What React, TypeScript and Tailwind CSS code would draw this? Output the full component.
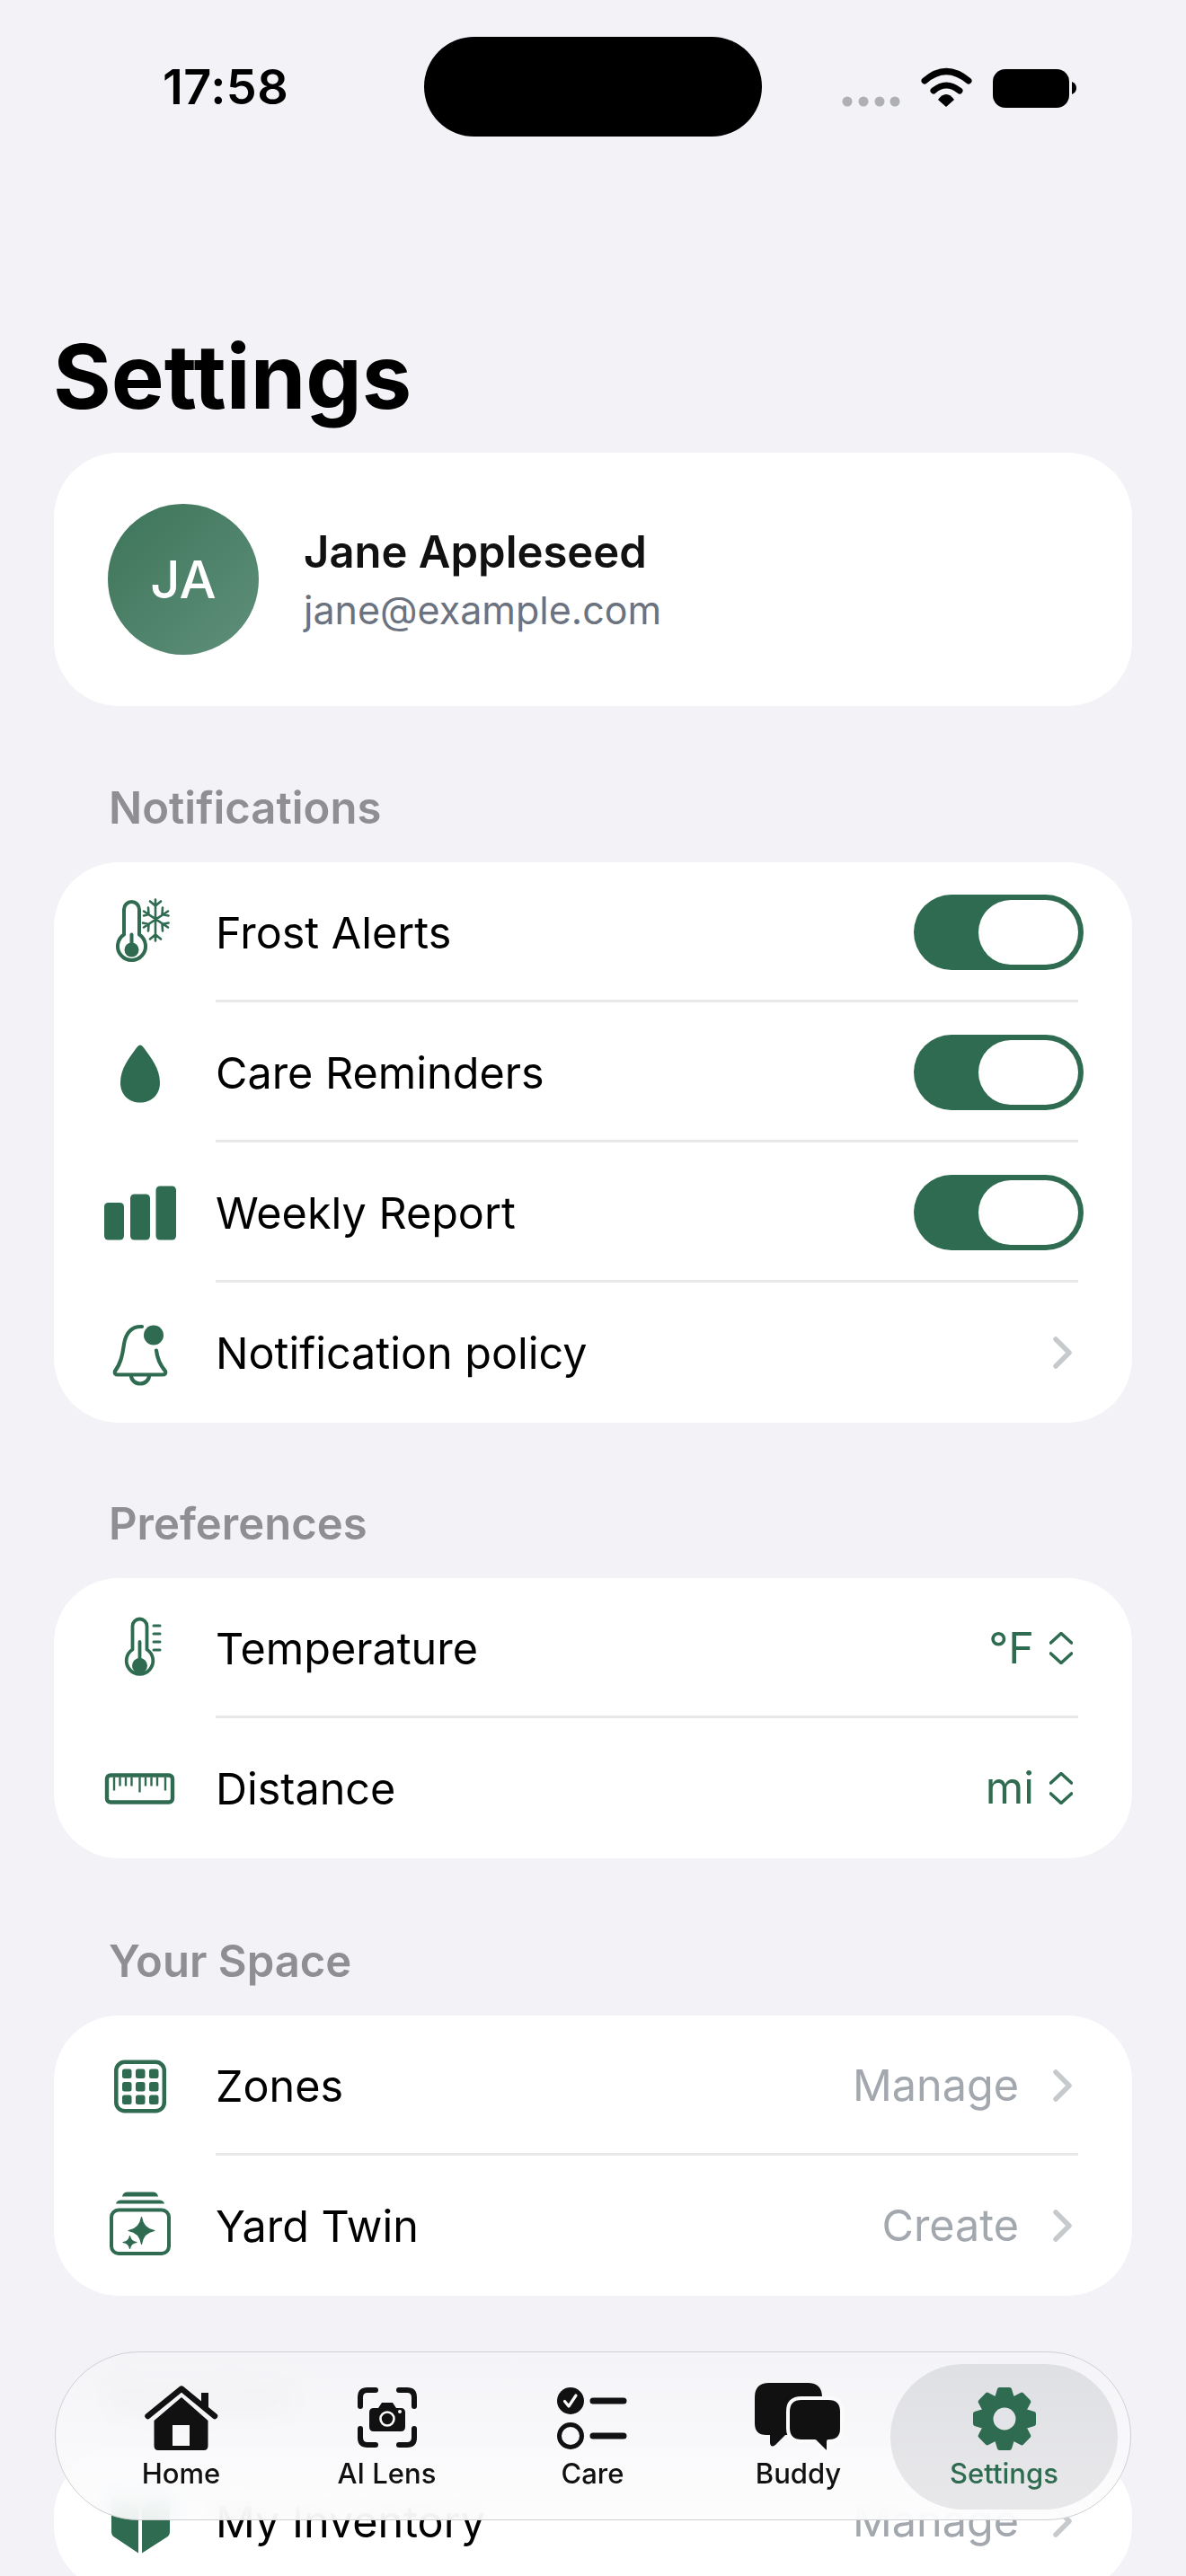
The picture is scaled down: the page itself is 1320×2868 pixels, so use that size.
import type { ReactNode } from "react";

const GREEN = "#2f6b50";
const INK = "#111111";

function gearPath(cx: number, cy: number) {
    const points: string[] = [];
    for (let i = 0; i < 8; i++) {
        const a = ((i * 45 - 90) * Math.PI) / 180;
        const spots: [number, number][] = [
            [25, -0.34],
            [33, -0.17],
            [33, 0.17],
            [25, 0.34],
        ];
        for (const [r, d] of spots) {
            points.push(`${(cx + r * Math.cos(a + d)).toFixed(1)} ${(cy + r * Math.sin(a + d)).toFixed(1)}`);
        }
    }
    return `M${points.join("L")}Z`;
}

function RowIcon({ cy, children }: { cy: number; children: ReactNode }) {
    return (
        <svg width="120" height="90" viewBox={`96 ${cy - 45} 120 90`} className="shrink-0 ml-[36px] mr-[24px]" fill="none" stroke={GREEN} strokeLinecap="round" strokeLinejoin="round">
            {children}
        </svg>
    );
}

function Chevron() {
    return (
        <svg width="21" height="36" viewBox="0 0 21 36" fill="none" className="ml-[38px] mr-[7px]">
            <path d="M3 3 L18 18 L3 33" stroke="#c6cacc" strokeWidth="5.5" strokeLinecap="round" strokeLinejoin="round" />
        </svg>
    );
}

function UpDown() {
    return (
        <svg width="26" height="36" viewBox="0 0 26 36" fill="none" className="ml-[17px] mr-[6px]">
            <path d="M1.5 12 L13 1.5 L24.5 12 M1.5 24 L13 34.5 L24.5 24" stroke={GREEN} strokeWidth="3.6" strokeLinecap="round" strokeLinejoin="round" />
        </svg>
    );
}

function Toggle() {
    return (
        <div className="w-[189px] h-[84px] rounded-full bg-[#2f6b50] p-[6px] flex justify-end -mr-[6px]">
            <div className="w-[111px] h-[72px] rounded-full bg-white" />
        </div>
    );
}

function Row({ icon, label, right }: { icon: ReactNode; label: string; right?: ReactNode }) {
    return (
        <div className="h-[153px] flex items-center pr-[60px]">
            {icon}
            <span className="pt-[4px] text-[48.5px] leading-[60px] text-black">{label}</span>
            <div className="ml-auto pt-[3px] flex items-center">{right}</div>
        </div>
    );
}

function Divider() {
    return <div className="h-[3px] ml-[180px] mr-[60px] bg-[#e8e8ea]" />;
}

function Section({ title, className, children }: { title: string; className: string; children: ReactNode }) {
    return (
        <section className={className}>
            <h2 className="pl-[61px] mb-[30px] text-[49px] leading-[60px] font-semibold text-[#8e8e93]">{title}</h2>
            <div className="bg-white rounded-[72px] overflow-hidden pb-[3px]">{children}</div>
        </section>
    );
}

function Value({ children, muted }: { children: string; muted?: boolean }) {
    return <span className={muted ? "text-[48.5px] leading-[60px] text-[#a2a8ae]" : "text-[48.5px] leading-[60px] text-[#2f6b50]"}>{children}</span>;
}

function StatusBar() {
    return (
        <div className="h-[360px] pt-[41px]">
            <div className="h-[111px] flex items-center">
                <span className="ml-[181px] w-[291px] text-[54px] font-semibold leading-none text-black tracking-[0.5px]">17:58</span>
                <div className="w-[376px] h-[111px] rounded-full bg-black" />
                <svg width="280" height="60" viewBox="930 66 280 60" className="ml-[82px]">
                    <g fill="#aeb0b3">
                        <circle cx="943" cy="112" r="5.5" />
                        <circle cx="961" cy="112" r="5.5" />
                        <circle cx="979" cy="112" r="5.5" />
                        <circle cx="996" cy="112" r="5.5" />
                    </g>
                    <path d="M1029 89 Q1053 68 1078 89 M1039 100 Q1053 88 1068 100" fill="none" stroke="#000" strokeWidth="7" strokeLinecap="round" />
                    <path d="M1053 104 Q1058 104 1062 110 L1053 118 L1044 110 Q1048 104 1053 104Z" fill="#000" />
                    <rect x="1105" y="76" width="85" height="43" rx="14" fill="#000" />
                    <path d="M1193 90 Q1198 92 1198 97 Q1198 102 1193 104Z" fill="#000" />
                </svg>
            </div>
        </div>
    );
}

function NavItem({ label, active, children }: { label: string; active?: boolean; children: ReactNode }) {
    return (
        <div className="relative w-[229px] flex flex-col items-center pt-[34px]">
            {active && <div className="absolute left-[-12px] right-[-12px] top-[13px] h-[162px] rounded-[81px] bg-linear-to-b from-[#dfe0e3] to-[#e8e8eb]" />}
            <div className="relative h-[80px]">{children}</div>
            <span className={active ? "relative mt-[1px] text-[31px] leading-[40px] font-medium text-[#2f6b50]" : "relative mt-[1px] text-[31px] leading-[40px] font-medium text-[#111]"}>{label}</span>
        </div>
    );
}

function BottomNav() {
    return (
        <nav className="absolute left-[61px] top-[2618px] w-[1198px] h-[188px] rounded-[94px] px-[25px] flex bg-linear-to-b from-[#f5f5f8]/90 to-[#fdfdfe]/90 backdrop-blur-lg border border-[#cfd0d3]">
            <NavItem label="Home">
                <svg width="120" height="80" viewBox="143 2652 120 80">
                    <path d="M172.5 2694 L203 2668 L232.5 2694 V2722 Q232.5 2727 228 2727 H177 Q172.5 2727 172.5 2722Z M193 2699 V2722 H212 V2699Z" fill={INK} fillRule="evenodd" />
                    <path d="M165.5 2689 L203 2658.5 L240 2689" fill="none" stroke={INK} strokeWidth="6.5" strokeLinecap="round" strokeLinejoin="round" />
                    <rect x="225" y="2663" width="8" height="18" fill={INK} />
                </svg>
            </NavItem>
            <NavItem label="AI Lens">
                <svg width="120" height="80" viewBox="370 2652 120 80">
                    <path d="M400 2678 V2668 Q400 2660 408 2660 H417 M443 2660 H452 Q460 2660 460 2668 V2678 M460 2703 V2713 Q460 2721 452 2721 H443 M417 2721 H408 Q400 2721 400 2713 V2703" fill="none" stroke={INK} strokeWidth="6" strokeLinecap="round" />
                    <path d="M415 2680 H420 L424 2674 H436 L440 2680 H445 Q450 2680 450 2685 V2701 Q450 2706 445 2706 H415 Q410 2706 410 2701 V2685 Q410 2680 415 2680Z" fill={INK} />
                    <circle cx="430" cy="2692" r="7.5" fill="none" stroke="#fbfbfc" strokeWidth="2.6" />
                    <circle cx="444" cy="2684" r="2" fill="#fbfbfc" />
                </svg>
            </NavItem>
            <NavItem label="Care">
                <svg width="120" height="80" viewBox="600 2652 120 80">
                    <circle cx="635" cy="2672" r="15" fill={INK} />
                    <path d="M628.5 2672.5 L633 2678 L641 2666" fill="none" stroke="#fbfbfc" strokeWidth="3.2" strokeLinecap="round" strokeLinejoin="round" />
                    <circle cx="635" cy="2711" r="12.5" fill="none" stroke={INK} strokeWidth="5" />
                    <path d="M660 2672 H694 M660 2711 H694" stroke={INK} strokeWidth="7" strokeLinecap="round" />
                </svg>
            </NavItem>
            <NavItem label="Buddy">
                <svg width="120" height="80" viewBox="829 2652 120 80">
                    <path d="M856 2652 H899 Q915 2652 915 2668 V2700 Q915 2710 905 2710 H874 L863 2721 Q858 2725 857 2719 V2710 H853 Q840 2710 840 2697 V2668 Q840 2652 856 2652Z" fill={INK} />
                    <path d="M892 2669 H922 Q937 2669 937 2684 V2703 Q937 2717 923 2717 H922 V2727 Q921 2731 917 2727 L907 2717 H892 Q877 2717 877 2702 V2684 Q877 2669 892 2669Z" fill={INK} stroke="#fbfbfc" strokeWidth="4" strokeLinejoin="round" />
                </svg>
            </NavItem>
            <NavItem label="Settings" active>
                <svg width="120" height="80" viewBox="1057 2651 120 80">
                    <path d={gearPath(1117, 2691)} fill={GREEN} stroke={GREEN} strokeWidth="5" strokeLinejoin="round" />
                    <circle cx="1117" cy="2691" r="12.5" fill="#e3e4e7" />
                </svg>
            </NavItem>
        </nav>
    );
}

export default function App() {
    return (
        <div className="relative w-[1320px] h-[2868px] overflow-hidden bg-[#f2f2f7] font-[Inter,sans-serif]">
            <StatusBar />

            <div className="px-[60px]">
                <h1 className="h-[144px] -ml-[1px] text-[99px] leading-[118px] font-bold text-black">Settings</h1>

                {/* Profile */}
                <div className="h-[282px] bg-white rounded-[72px] flex items-center pl-[60px]">
                    <div className="w-[168px] h-[168px] rounded-full bg-linear-to-br from-[#3d7559] to-[#5f8f7b] flex items-center justify-center text-white text-[58px] font-medium">JA</div>
                    <div className="ml-[50px] pt-[4px]">
                        <div className="text-[49px] leading-[64px] font-semibold text-[#111]">Jane Appleseed</div>
                        <div className="text-[43px] leading-[64px] text-[#6b7280]">jane@example.com</div>
                    </div>
                </div>

                <Section title="Notifications" className="mt-[84px]">
                    <Row
                        label="Frost Alerts"
                        right={<Toggle />}
                        icon={
                            <RowIcon cy={1036.5}>
                                <path d="M138 1040 V1012 A8.5 8.5 0 0 1 155 1012 V1040 A15.5 15.5 0 1 1 138 1040Z" strokeWidth="4" />
                                <circle cx="146.5" cy="1057" r="8" fill={GREEN} stroke="none" />
                                <path d="M146.5 1057 V1040" strokeWidth="4" />
                                <path d="M173 1001 V1047 M160 1014 L187 1032 M187 1014 L160 1032 M167 1003 L173 1008 L179 1003 M167 1045 L173 1040 L179 1045 M181 1010 L180.5 1017.5 L187.5 1019 M159 1027 L165.5 1028.5 L165 1036 M181 1036 L180.5 1028.5 L187.5 1027 M160 1019 L165.5 1017.5 L165 1010" strokeWidth="2.6" />
                            </RowIcon>
                        }
                    />
                    <Divider />
                    <Row
                        label="Care Reminders"
                        right={<Toggle />}
                        icon={
                            <RowIcon cy={1192.5}>
                                <path d="M156 1163 Q158 1163 160 1166 C168 1177 178 1189 178 1205 C178 1219 168 1227 156 1227 C144 1227 134 1219 134 1205 C134 1189 144 1177 152 1166 Q154 1163 156 1163Z" fill={GREEN} stroke="none" />
                            </RowIcon>
                        }
                    />
                    <Divider />
                    <Row
                        label="Weekly Report"
                        right={<Toggle />}
                        icon={
                            <RowIcon cy={1348.5}>
                                <g fill={GREEN} stroke="none">
                                    <rect x="116" y="1338.5" width="22" height="41.5" rx="4.5" />
                                    <rect x="145" y="1329" width="22" height="51" rx="4.5" />
                                    <rect x="173.5" y="1320" width="22.5" height="60" rx="4.5" />
                                </g>
                            </RowIcon>
                        }
                    />
                    <Divider />
                    <Row
                        label="Notification policy"
                        right={<Chevron />}
                        icon={
                            <RowIcon cy={1504.5}>
                                <path d="M158 1476.5 C146 1476 140 1484 138 1496 C136 1510 134 1518 128 1526 Q127 1530 131 1530 H181 Q185 1530 184 1526 C178 1519 175 1512 174 1503" strokeWidth="4.2" />
                                <path d="M146 1531 A10 9 0 0 0 166 1531" strokeWidth="4.2" />
                                <circle cx="171" cy="1486" r="11" fill={GREEN} stroke="none" />
                            </RowIcon>
                        }
                    />
                </Section>

                <Section title="Preferences" className="mt-[83px]">
                    <Row
                        label="Temperature"
                        right={
                            <>
                                <Value>°F</Value>
                                <UpDown />
                            </>
                        }
                        icon={
                            <RowIcon cy={1833.5}>
                                <path d="M147.5 1836 V1810 A8 8 0 0 1 163.5 1810 V1836 A14.8 14.8 0 1 1 147.5 1836Z" strokeWidth="3.8" />
                                <circle cx="155.5" cy="1854" r="8.5" fill={GREEN} stroke="none" />
                                <path d="M155.5 1854 V1827.5" strokeWidth="3.8" />
                                <path d="M171 1809.5 H178 M171 1818.5 H178 M171 1827.5 H178 M171 1836.5 H178" strokeWidth="3" />
                            </RowIcon>
                        }
                    />
                    <Divider />
                    <Row
                        label="Distance"
                        right={
                            <>
                                <Value>mi</Value>
                                <UpDown />
                            </>
                        }
                        icon={
                            <RowIcon cy={1989.5}>
                                <rect x="119" y="1976" width="73" height="30" rx="4" strokeWidth="4.4" />
                                <path d="M127 1978 V1993 M133.5 1978 V1988 M140 1978 V1988 M146.5 1978 V1988 M155.5 1978 V1995 M162 1978 V1988 M168.5 1978 V1988 M175 1978 V1988 M184 1978 V1993" strokeWidth="2.4" strokeLinecap="butt" />
                            </RowIcon>
                        }
                    />
                </Section>

                <Section title="Your Space" className="mt-[85px]">
                    <Row
                        label="Zones"
                        right={
                            <>
                                <Value muted>Manage</Value>
                                <Chevron />
                            </>
                        }
                        icon={
                            <RowIcon cy={2319.5}>
                                <rect x="129.3" y="2294.3" width="53.5" height="54.5" rx="9.5" strokeWidth="4.5" />
                                <g fill={GREEN} stroke="none">
                                    <rect x="136" y="2302" width="10.5" height="10.5" rx="2.5" />
                                    <rect x="151" y="2302" width="10.5" height="10.5" rx="2.5" />
                                    <rect x="166" y="2302" width="10.5" height="10.5" rx="2.5" />
                                    <rect x="136" y="2316.5" width="10.5" height="10.5" rx="2.5" />
                                    <rect x="151" y="2316.5" width="10.5" height="10.5" rx="2.5" />
                                    <rect x="166" y="2316.5" width="10.5" height="10.5" rx="2.5" />
                                    <rect x="136" y="2331" width="10.5" height="10.5" rx="2.5" />
                                    <rect x="151" y="2331" width="10.5" height="10.5" rx="2.5" />
                                    <rect x="166" y="2331" width="10.5" height="10.5" rx="2.5" />
                                </g>
                            </RowIcon>
                        }
                    />
                    <Divider />
                    <Row
                        label="Yard Twin"
                        right={
                            <>
                                <Value muted>Create</Value>
                                <Chevron />
                            </>
                        }
                        icon={
                            <RowIcon cy={2475.5}>
                                <path d="M136 2444 Q137 2439 142 2439 H170 Q175 2439 176 2444Z M129 2452 Q130 2448 135 2448 H177 Q182 2448 183 2452Z" fill={GREEN} stroke="none" />
                                <rect x="124" y="2459" width="64" height="48.5" rx="8" strokeWidth="4" />
                                <path d="M157.5 2467 Q159.5 2480 172 2482 Q159.5 2484 157.5 2497 Q155.5 2484 143 2482 Q155.5 2480 157.5 2467Z M144.5 2488 Q145.5 2494 152 2495 Q145.5 2496 144.5 2502 Q143.5 2496 137 2495 Q143.5 2494 144.5 2488Z" fill={GREEN} stroke={GREEN} strokeWidth="1.2" />
                            </RowIcon>
                        }
                    />
                </Section>

                <Section title="Supplies" className="mt-[83px]">
                    <Row
                        label="My Inventory"
                        right={
                            <>
                                <Value muted>Manage</Value>
                                <Chevron />
                            </>
                        }
                        icon={
                            <RowIcon cy={2804.5}>
                                <path d="M124 2776 L154 2790 V2841 L127 2823 Q124 2821 124 2817Z M189 2776 L158 2790 V2841 L186 2823 Q189 2821 189 2817Z" fill={GREEN} stroke="none" />
                            </RowIcon>
                        }
                    />
                </Section>
            </div>

            <BottomNav />
        </div>
    );
}
